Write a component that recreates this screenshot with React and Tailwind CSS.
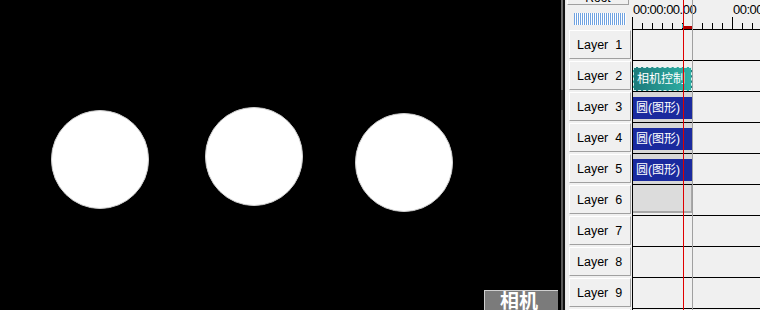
import React from 'react';

const LAYERS = [1, 2, 3, 4, 5, 6, 7, 8, 9, 10];

const CIRCLES = [
  { x: 51, y: 110 },
  { x: 205, y: 107 },
  { x: 355, y: 113 },
];

function Ruler() {
  const ticks = [];
  for (let i = 0; i <= 13; i++) {
    const x = 0.5 + i * 10;
    const major = i % 10 === 0;
    ticks.push(<line key={i} x1={x} x2={x} y1={major ? 17 : 23} y2={29} stroke="#000" strokeWidth="1" />);
  }
  return (
    <div className="relative flex-1 h-[29px] overflow-hidden">
      <span className="absolute left-[1px] top-[2px] text-[13px] leading-[15px] tracking-[-0.5px] text-black">00:00:00.00</span>
      <span className="absolute left-[101px] top-[2px] text-[13px] leading-[15px] tracking-[-0.5px] text-black">00:00:00.00</span>
      <svg className="absolute left-0 top-0" width="128" height="29">
        {ticks}
        <rect x="51" y="26" width="9" height="3" fill="#b40000" />
        <rect x="50" y="24" width="1" height="4" fill="#3cc8d8" />
      </svg>
    </div>
  );
}

function Clip({ layer }) {
  if (layer === 2) {
    return (
      <div className="mt-[6px] w-[59px] h-[24px] border border-dashed border-[#d8f0ee] bg-gradient-to-r from-[#1d7b7b] to-[#2fb2a6] text-white text-[12px] leading-[22px] pl-[3px] whitespace-nowrap overflow-hidden">
        相机控制
      </div>
    );
  }
  if (layer >= 3 && layer <= 5) {
    return (
      <div className="w-[60px] h-full bg-[#d6d6d6] pt-[5px]">
        <div className="w-[59px] h-[22px] bg-[#1a2a9e] text-white text-[12px] leading-[22px] pl-[3px] whitespace-nowrap overflow-hidden">
          圆(图形)
        </div>
      </div>
    );
  }
  if (layer === 6) {
    return <div className="w-[60px] h-[28px] bg-[#dcdcdc] border-r-[2px] border-b-[2px] border-[#a8a8a8]" />;
  }
  return null;
}

export default function App() {
  return (
    <div className="w-[760px] h-[310px] flex overflow-hidden bg-black" style={{ fontFamily: '"Liberation Sans", "Noto Sans CJK SC", sans-serif' }}>
      {/* preview */}
      <div className="relative w-[561px] h-full bg-black">
        {CIRCLES.map((c, i) => (
          <div key={i} className="absolute w-[98px] h-[99px] rounded-full bg-white border border-[#d0d0d0]" style={{ left: c.x, top: c.y }} />
        ))}
        <div className="absolute left-[484px] top-[290px] w-[74px] h-[24px] bg-[#7b7b7b] border-t border-l border-[#cfcfcf] text-white font-bold text-[19px] leading-[22px] pl-[15px]">
          相机
        </div>
      </div>

      {/* divider */}
      <div className="w-[2px] h-full flex flex-col">
        <div className="h-[90px] bg-[#6a6a6a]" />
        <div className="h-[20px] bg-[#333]" />
        <div className="flex-1 bg-[#5a5a5a]" />
      </div>
      <div className="w-[2px] h-full bg-[#111]" />

      {/* timeline panel */}
      <div className="relative flex-1 h-full bg-[#f0f0f0] border-l border-[#e8e8e8] flex flex-col">
        <div className="flex h-[29px] shrink-0">
          <div className="w-[66px] shrink-0 pl-[1px]">
            <div className="mt-[-12px] w-[62px] h-[17px] bg-[#f0f0f0] border-t border-l border-white border-r border-b border-r-[#a0a0a0] border-b-[#a0a0a0] text-center text-[12px] leading-[12px] pt-[3px]">
              Root
            </div>
            <div className="mt-[8px] ml-[7px] w-[52px] h-[12px] bg-[repeating-linear-gradient(90deg,#6fa2e0_0px,#6fa2e0_1px,#ffffff_1px,#ffffff_2px)]" />
          </div>
          <Ruler />
        </div>

        {LAYERS.map(n => (
          <div key={n} className="flex h-[31px] shrink-0">
            <div className="w-[66px] shrink-0 pl-[3px] py-[1px]">
              <div className="w-[62px] h-full bg-[#f0f0f0] border-t border-l border-white border-r border-b border-r-[#a0a0a0] border-b-[#a0a0a0] flex items-center pl-[7px] pt-[2px] text-[12.5px] text-black whitespace-pre">
                {`Layer  ${n}`}
              </div>
            </div>
            <div className="flex-1 border-t border-l border-black">
              <Clip layer={n} />
            </div>
          </div>
        ))}

        {/* cursor + end lines */}
        <div className="absolute top-0 bottom-0 left-[117px] w-px bg-[#e00000]" />
        <div className="absolute top-0 bottom-0 left-[126px] w-px bg-[#a0a0a0]" />
      </div>
    </div>
  );
}
